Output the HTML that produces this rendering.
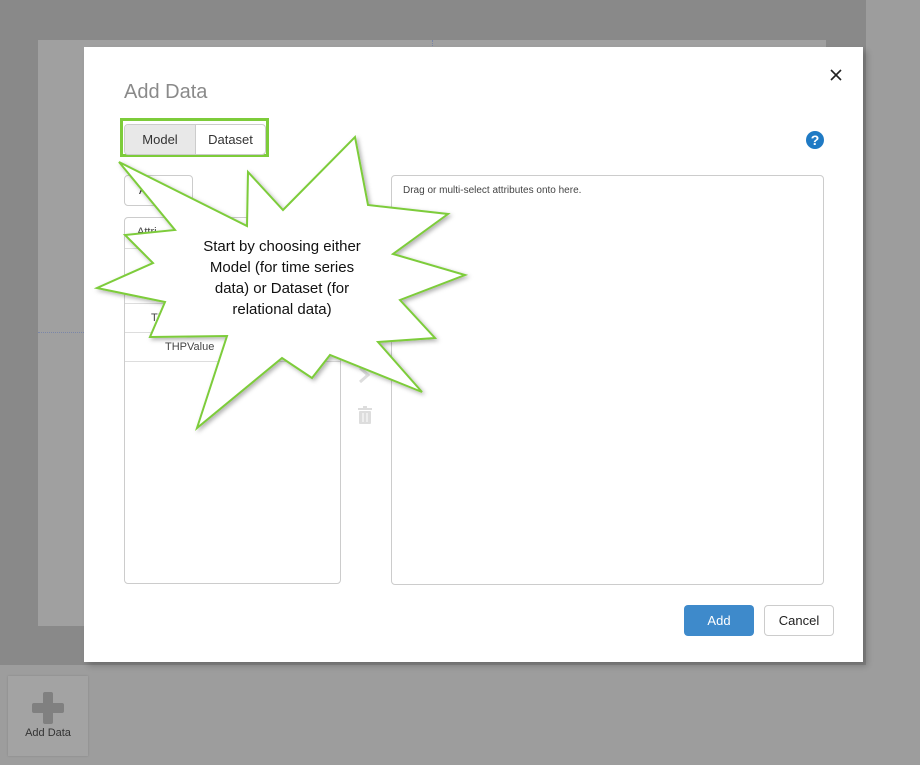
<!DOCTYPE html>
<html><head><style>
body{margin:0;width:920px;height:765px;overflow:hidden;background:#9d9d9d;font-family:"Liberation Sans",sans-serif;position:relative}
.a{position:absolute}
</style></head><body>
<div class="a" style="left:0;top:0;width:866px;height:665px;background:#898989"></div>
<div class="a" style="left:38px;top:40px;width:788px;height:586px;background:#a0a0a0"></div>
<div class="a" style="left:432px;top:40px;height:8px;border-left:1px dotted #7a86a8"></div>
<div class="a" style="left:38px;top:332px;width:46px;border-top:1px dotted #7a86a8"></div>
<div class="a" style="left:8px;top:676px;width:80px;height:80px;background:#a3a3a3;box-shadow:0 0 2px rgba(0,0,0,.15)"></div>
<div class="a" style="left:32px;top:703px;width:32px;height:10px;background:#808080;border-radius:2px"></div>
<div class="a" style="left:43px;top:692px;width:10px;height:32px;background:#808080;border-radius:2px"></div>
<div class="a" style="left:8px;top:727px;width:80px;text-align:center;font-size:11px;color:#333">Add Data</div>

<div class="a" style="left:84px;top:47px;width:779px;height:615px;background:#fff;box-shadow:4px 4px 6px rgba(0,0,0,.2)"></div>
<div class="a" style="left:124px;top:81px;font-size:20px;color:#8a8a8a">Add Data</div>
<svg class="a" style="left:830px;top:69px" width="12" height="12"><path d="M1 1L11 11M11 1L1 11" stroke="#222" stroke-width="1.6"/></svg>
<div class="a" style="left:806px;top:131px;width:18px;height:18px;border-radius:50%;background:#1f7ac4;color:#fff;font-weight:bold;font-size:14px;text-align:center;line-height:18px">?</div>

<div class="a" style="left:120px;top:118px;width:149px;height:39px;border:3px solid #7dcc3a;box-sizing:border-box"></div>
<div class="a" style="left:124px;top:124px;width:142px;height:31px;border:1px solid #ccc;border-radius:4px;box-sizing:border-box;display:flex;font-size:13px;color:#333;overflow:hidden">
<div style="width:70px;background:#e8e8e8;border-right:1px solid #ccc;text-align:center;line-height:29px">Model</div>
<div style="flex:1;text-align:center;line-height:29px">Dataset</div></div>

<div class="a" style="left:124px;top:175px;width:69px;height:31px;border:1px solid #ccc;border-radius:4px;box-sizing:border-box;font-size:12px;color:#333;line-height:29px;padding-left:14px">A</div>
<div class="a" style="left:124px;top:217px;width:217px;height:367px;border:1px solid #ccc;border-radius:4px;box-sizing:border-box;font-size:11px;color:#444">
<div style="height:30px;border-bottom:1px solid #ddd;line-height:28px;padding-left:12px">Attri</div>
<div style="position:absolute;top:85px;left:0;right:0;border-top:1px solid #ddd;height:28px;line-height:28px;padding-left:26px">TH</div>
<div style="position:absolute;top:114px;left:0;right:0;border-top:1px solid #ddd;border-bottom:1px solid #ddd;height:28px;line-height:28px;padding-left:40px">THPValue</div>
</div>
<div class="a" style="left:391px;top:175px;width:433px;height:410px;border:1px solid #ccc;border-radius:4px;box-sizing:border-box;font-size:10px;color:#444;padding:9px 11px">Drag or multi-select attributes onto here.</div>
<svg class="a" style="left:355px;top:365px" width="22" height="62"><path d="M5 3 L13 10 L5 17" stroke="#ddd" stroke-width="3" fill="none"/><g fill="#ddd"><rect x="3" y="43" width="14" height="2"/><rect x="8" y="41" width="4" height="2"/><rect x="4" y="46" width="12" height="13" rx="1"/></g><g stroke="#fff" stroke-width="1"><line x1="8" y1="48" x2="8" y2="57"/><line x1="12" y1="48" x2="12" y2="57"/></g></svg>

<div class="a" style="left:684px;top:605px;width:70px;height:31px;background:#3e8acb;border-radius:4px;color:#fff;font-size:13px;text-align:center;line-height:31px">Add</div>
<div class="a" style="left:764px;top:605px;width:70px;height:31px;border:1px solid #ccc;box-sizing:border-box;border-radius:4px;color:#222;font-size:13px;text-align:center;line-height:29px">Cancel</div>

<svg class="a" style="left:0;top:0" width="920" height="765">
<defs><filter id="s"><feDropShadow dx="2" dy="2" stdDeviation="2" flood-opacity="0.3"/></filter></defs>
<polygon filter="url(#s)" fill="#fff" stroke="#7dcc3a" stroke-width="2" stroke-linejoin="miter" points="119,162 247,226 248,172 283,210 355,137 368,205 448,214 393,254 465,275 400,300 435,338 378,342 422,392 330,355 312,378 282,358 197,428 227,336 150,337 165,302 97,288 153,263 125,235 175,230"/>
<text font-family="Liberation Sans,sans-serif" font-size="15" fill="#111" text-anchor="middle"><tspan x="282" y="251">Start by choosing either</tspan><tspan x="282" y="272">Model (for time series</tspan><tspan x="282" y="293">data) or Dataset (for</tspan><tspan x="282" y="314">relational data)</tspan></text>
</svg>
</body></html>
